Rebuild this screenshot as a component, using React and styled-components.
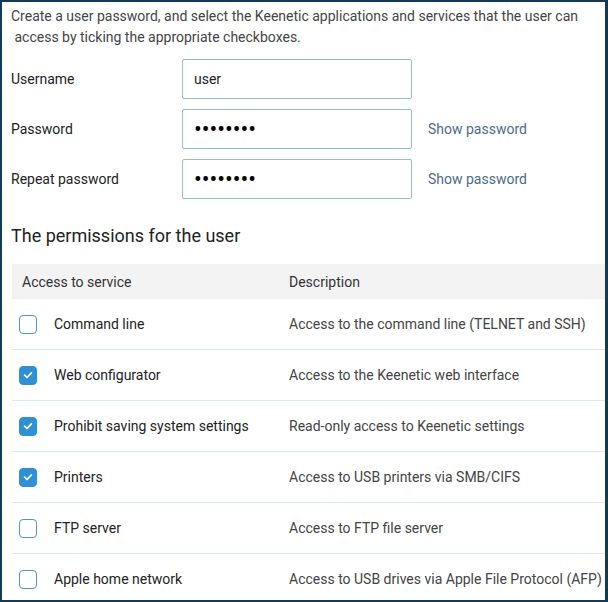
import React, { useState } from 'react';
import styled, { createGlobalStyle } from 'styled-components';

const GlobalStyle = createGlobalStyle`
  html, body {
    margin: 0;
    padding: 0;
    background: #ffffff;
  }
  * {
    box-sizing: border-box;
  }
`;

const permissions = [
  { id: 'cli', name: 'Command line', description: 'Access to the command line (TELNET and SSH)', checked: false },
  { id: 'web', name: 'Web configurator', description: 'Access to the Keenetic web interface', checked: true },
  { id: 'ro', name: 'Prohibit saving system settings', description: 'Read-only access to Keenetic settings', checked: true },
  { id: 'printers', name: 'Printers', description: 'Access to USB printers via SMB/CIFS', checked: true },
  { id: 'ftp', name: 'FTP server', description: 'Access to FTP file server', checked: false },
  { id: 'afp', name: 'Apple home network', description: 'Access to USB drives via Apple File Protocol (AFP)', checked: false },
];

const Check = ({ checked, onToggle }) => (
  <CheckBox type="button" $checked={checked} onClick={onToggle} aria-pressed={checked}>
    {checked && (
      <svg width="12" height="12" viewBox="0 0 12 12">
        <path d="M2.6 6.2 L5 8.5 L9.4 3.8" fill="none" stroke="#fff" strokeWidth="1.7" strokeLinecap="round" strokeLinejoin="round" />
      </svg>
    )}
  </CheckBox>
);

const App = () => {
  const [username, setUsername] = useState('user');
  const [password, setPassword] = useState('password');
  const [repeat, setRepeat] = useState('password');
  const [items, setItems] = useState(permissions);

  const toggle = (id) => {
    setItems(items.map((item) => (item.id === id ? { ...item, checked: !item.checked } : item)));
  };

  return (
    <>
      <GlobalStyle />
      <Frame>
        <Intro>
          Create a user password, and select the Keenetic applications and services that the user can
          <br />
          &nbsp;access by ticking the appropriate checkboxes.
        </Intro>
        <Form>
          <FieldRow>
            <Label htmlFor="username">Username</Label>
            <Input id="username" type="text" value={username} onChange={(e) => setUsername(e.target.value)} />
          </FieldRow>
          <FieldRow>
            <Label htmlFor="password">Password</Label>
            <Input id="password" type="password" value={password} onChange={(e) => setPassword(e.target.value)} />
            <ShowLink>Show password</ShowLink>
          </FieldRow>
          <FieldRow>
            <Label htmlFor="repeat">Repeat password</Label>
            <Input id="repeat" type="password" value={repeat} onChange={(e) => setRepeat(e.target.value)} />
            <ShowLink>Show password</ShowLink>
          </FieldRow>
        </Form>
        <Heading>The permissions for the user</Heading>
        <Table>
          <HeaderRow>
            <HeaderCell>Access to service</HeaderCell>
            <HeaderCell>Description</HeaderCell>
          </HeaderRow>
          {items.map((item) => (
            <Row key={item.id}>
              <ServiceCell>
                <Check checked={item.checked} onToggle={() => toggle(item.id)} />
                <span>{item.name}</span>
              </ServiceCell>
              <DescCell>{item.description}</DescCell>
            </Row>
          ))}
        </Table>
      </Frame>
    </>
  );
};

export default App;

const Frame = styled.div`
  width: 608px;
  height: 602px;
  overflow: hidden;
  border: 2px solid #153a56;
  border-right-width: 3px;
  padding: 4px 0 0 9px;
  font-family: Roboto, 'Liberation Sans', sans-serif;
  color: #222;
`;

const Intro = styled.p`
  margin: 0 10px 0 0;
  font-size: 14px;
  line-height: 21px;
  color: #444;
`;

const Form = styled.div`
  display: flex;
  flex-direction: column;
  gap: 10px;
  margin-top: 11px;
`;

const FieldRow = styled.div`
  display: flex;
  align-items: center;
  height: 40px;
`;

const Label = styled.label`
  width: 171px;
  font-size: 14px;
  color: #222;
`;

const Input = styled.input`
  width: 230px;
  height: 40px;
  border: 1px solid #93bfd6;
  border-radius: 2px;
  padding: 0 11px;
  font-family: Roboto, 'Liberation Sans', sans-serif;
  font-size: 14px;
  color: #222;
  outline: none;
  &[type='password'] {
    font-size: 23px;
    letter-spacing: 0;
    color: #000;
  }
`;

const ShowLink = styled.span`
  margin-left: 16px;
  font-size: 14px;
  color: #4d6b85;
  cursor: pointer;
`;

const Heading = styled.h2`
  margin: 25px 0 16px 0;
  font-size: 18px;
  line-height: 24px;
  font-weight: 400;
  color: #222;
`;

const Table = styled.div`
  margin-left: 1px;
`;

const HeaderRow = styled.div`
  display: grid;
  grid-template-columns: 277px 1fr;
  align-items: center;
  height: 35px;
  background: #f3f3f3;
`;

const HeaderCell = styled.div`
  font-size: 14px;
  color: #333;
  &:first-child {
    padding-left: 10px;
  }
`;

const Row = styled.div`
  display: grid;
  grid-template-columns: 277px 1fr;
  align-items: center;
  height: 51px;
  border-bottom: 1px solid #dde9f1;
`;

const ServiceCell = styled.div`
  display: flex;
  align-items: center;
  gap: 17px;
  padding-left: 7px;
  font-size: 14px;
  color: #222;
  white-space: nowrap;
`;

const DescCell = styled.div`
  font-size: 14px;
  color: #444;
  white-space: nowrap;
`;

const CheckBox = styled.button`
  width: 18px;
  height: 19px;
  flex-shrink: 0;
  padding: 0;
  display: flex;
  align-items: center;
  justify-content: center;
  border-radius: 4px;
  border: 1px solid ${({ $checked }) => ($checked ? '#2f90d6' : '#4f94c4')};
  background: ${({ $checked }) => ($checked ? '#2f90d6' : '#fff')};
  cursor: pointer;
`;
